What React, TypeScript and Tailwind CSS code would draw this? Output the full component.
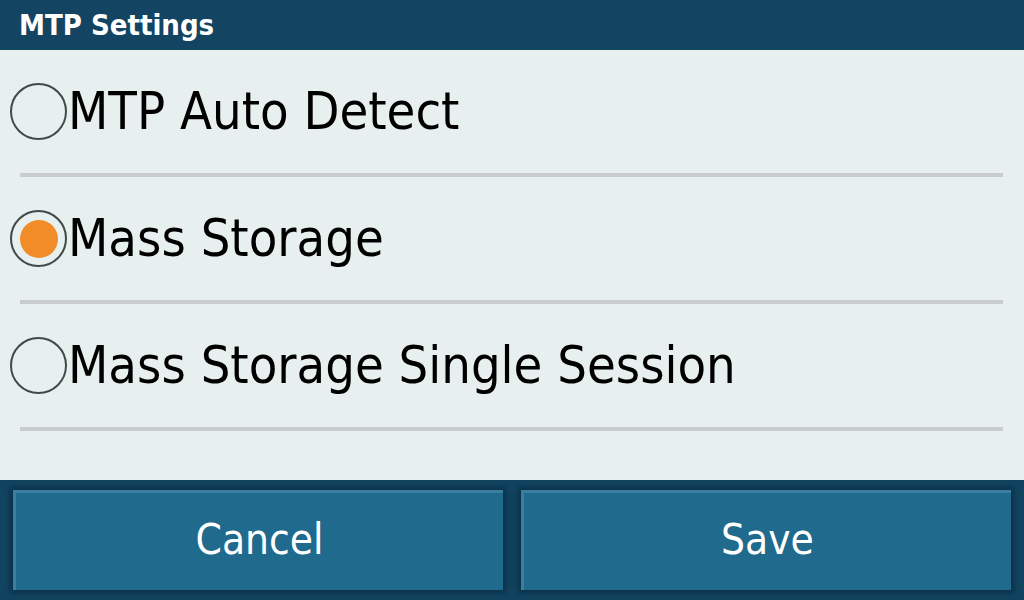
import React from "react";

const font = { fontFamily: '"DejaVu Sans Condensed", "DejaVu Sans", sans-serif' };

function Radio({ checked }: { checked: boolean }) {
  return (
    <div className="w-[57px] h-[57px] rounded-full border-[2.5px] border-[#3f4b4b] flex items-center justify-center shrink-0">
      {checked && <div className="w-[38px] h-[38px] rounded-full bg-[#f28c28]" />}
    </div>
  );
}

function Row({ label, checked }: { label: string; checked: boolean }) {
  return (
    <div className="flex flex-col">
      <div className="h-[123px] flex items-center pl-[10px]">
        <Radio checked={checked} />
        <span className="text-[52px] leading-none text-black font-stretch-condensed ml-[1px] mb-[2px]" style={font}>
          {label}
        </span>
      </div>
      <div className="h-[4px] ml-[20px] mr-[21px] bg-[#c8cccd]" />
    </div>
  );
}

function Btn({ label }: { label: string }) {
  return (
    <div className="flex-1 h-[100px] bg-[#206a8e] border-t-[3px] border-l-[3px] border-t-[#3b7fa0] border-l-[#3b7fa0] shadow-[0_0_6px_3px_rgba(8,40,58,0.7)] flex items-center justify-center">
      <span className="text-white text-[42px] leading-none font-stretch-condensed mb-[4px]" style={font}>
        {label}
      </span>
    </div>
  );
}

export default function App() {
  return (
    <div className="w-[1024px] h-[600px] flex flex-col bg-[#e8f0ef] overflow-hidden">
      <div className="h-[50px] bg-[#134563] flex items-center px-[19px]">
        <span className="text-white text-[29px] font-bold font-stretch-condensed leading-none" style={font}>
          MTP Settings
        </span>
      </div>
      <div className="h-[430px] flex flex-col">
        <Row label="MTP Auto Detect" checked={false} />
        <Row label="Mass Storage" checked={true} />
        <Row label="Mass Storage Single Session" checked={false} />
      </div>
      <div className="h-[120px] bg-[#124461] flex gap-[18px] pl-[13px] pr-[13px] pt-[10px] pb-[10px]">
        <Btn label="Cancel" />
        <Btn label="Save" />
      </div>
    </div>
  );
}
